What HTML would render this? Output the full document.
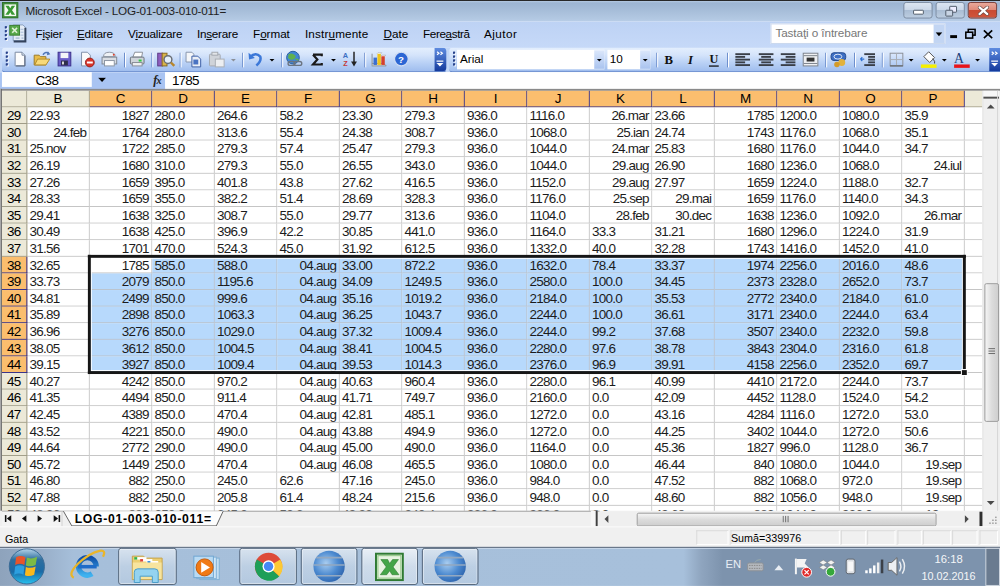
<!DOCTYPE html>
<html><head><meta charset="utf-8">
<style>
*{margin:0;padding:0;box-sizing:border-box}
html,body{width:1000px;height:586px;overflow:hidden;background:#fff}
body{font-family:"Liberation Sans",sans-serif}
#r{position:absolute;left:0;top:0;width:1024px;height:600px;transform:scale(0.9765625);transform-origin:0 0;overflow:hidden;background:#fff}
.a{position:absolute}
/* title */
#tb{position:absolute;left:0;top:0;width:1024px;height:22px;background:linear-gradient(#252525 0,#2a2a2a 1px,#b5cae3 1px,#9db5d2 3px,#a3bad6 8px,#b2c8e2 19px,#b8cde7 22px)}
#tt{position:absolute;left:26px;top:3px;font-size:12px;line-height:16px;color:#222;letter-spacing:-0.2px}
/* menu */
#mb{position:absolute;left:0;top:22px;width:1024px;height:27px;background:linear-gradient(#bdd2f4,#c6d9f8)}
.mi{position:absolute;top:5px;font-size:12px;line-height:16px;color:#000;letter-spacing:-0.35px}
.mi u{text-decoration:underline}
/* toolbar */
#tbr{position:absolute;left:0;top:49px;width:1024px;height:25px;background:#c3d7f7}
.tbar{position:absolute;top:0;height:25px;border-radius:3px;background:linear-gradient(#e3eefd 0,#d5e4fb 30%,#bcd3f6 60%,#9fbdee 100%);border-bottom:1px solid #5f83c8}
/* formula */
#fb{position:absolute;left:0;top:74px;width:1024px;height:19px;background:#fff}
/* grid */
.c{position:absolute;width:64px;height:17px;border-right:1px solid #c2c2c2;border-bottom:1px solid #c2c2c2;font-size:13.8px;letter-spacing:-0.8px;line-height:17px;padding:0 2.8px 0 2.3px;white-space:nowrap;overflow:hidden;color:#1c1c1c;background:#fff}
.c.r{text-align:right}
.c.s{background:#b7d9fc;border-color:#bcc3cb}
.c.q{width:18px;border-right:0}
.rh{position:absolute;left:2px;width:26px;height:17px;background:#ece9d8;border-right:1px solid #9c9984;border-bottom:1px solid #9c9984;font-size:13.8px;letter-spacing:-0.8px;text-indent:-0.8px;line-height:17px;text-align:center;color:#000}
.rh.sel{background:#fbbe6e;border-color:#2d2a8c}
.ch{position:absolute;top:93px;width:64px;height:17px;background:#ece9d8;border-right:1px solid #9c9984;border-bottom:1px solid #9c9984;font-size:13.8px;letter-spacing:-0.8px;text-indent:-0.8px;line-height:16px;text-align:center;color:#000}
.ch.sel{background:#fbbe6e;border-color:#2d2a8c}
.sb{position:absolute;background:#161616}
</style></head><body><div id="r">
<div id="tb"><svg class="a" style="left:2px;top:2px" width="17" height="17" viewBox="0 0 17 17">
<rect x="0.5" y="0.5" width="16" height="16" fill="#3f8c3a" stroke="#2d6e2a"/>
<rect x="2.5" y="2.5" width="12" height="12" fill="#f4f9f1"/>
<path d="M3.5 4 L7 4 L8.5 6.5 L10 4 L13.5 4 L10.3 8.5 L13.5 13 L10 13 L8.5 10.5 L7 13 L3.5 13 L6.7 8.5 Z" fill="#3a9a35"/>
</svg><div id="tt">Microsoft Excel - LOG-01-003-010-011=</div>
<div class="a" style="left:925px;top:2px;width:30px;height:17px;border:1px solid #7f8ea3;border-radius:3px;background:linear-gradient(#dbe5f1 0,#cbd8e8 45%,#aabdd4 50%,#bccde0 100%)"><div class="a" style="left:9px;top:7px;width:11px;height:5px;background:#fff;border:1px solid #515c6b;border-radius:1px"></div></div><div class="a" style="left:958px;top:2px;width:30px;height:17px;border:1px solid #7f8ea3;border-radius:3px;background:linear-gradient(#dbe5f1 0,#cbd8e8 45%,#aabdd4 50%,#bccde0 100%)"><div class="a" style="left:13px;top:3px;width:8px;height:7px;border:1.5px solid #515c6b;background:#eef;border-radius:1px"></div><div class="a" style="left:9px;top:7px;width:8px;height:7px;border:1.5px solid #515c6b;background:#c8d4e4;border-radius:1px"></div></div><div class="a" style="left:991px;top:2px;width:30px;height:17px;border:1px solid #7c3b33;border-radius:3px;background:linear-gradient(#e9a99b 0,#e08b7a 45%,#c94a32 50%,#d0553c 100%)"><svg class="a" style="left:9px;top:3px" width="12" height="10" viewBox="0 0 12 10"><path d="M2 1.5 L10 8.5 M10 1.5 L2 8.5" stroke="#6a4a46" stroke-width="3.6" stroke-linecap="round"/><path d="M2 1.5 L10 8.5 M10 1.5 L2 8.5" stroke="#fff" stroke-width="2.2" stroke-linecap="round"/></svg></div></div>
<div id="mb">
<svg class="a" style="left:0;top:0" width="40" height="27" viewBox="0 22 40 27">
<rect x="5" y="27" width="2" height="2" fill="#27418a"/><rect x="6" y="28" width="2" height="2" fill="#fff" opacity=".9"/><rect x="5" y="27" width="2" height="2" fill="#27418a"/><rect x="5" y="31" width="2" height="2" fill="#27418a"/><rect x="6" y="32" width="2" height="2" fill="#fff" opacity=".9"/><rect x="5" y="31" width="2" height="2" fill="#27418a"/><rect x="5" y="35" width="2" height="2" fill="#27418a"/><rect x="6" y="36" width="2" height="2" fill="#fff" opacity=".9"/><rect x="5" y="35" width="2" height="2" fill="#27418a"/><rect x="5" y="39" width="2" height="2" fill="#27418a"/><rect x="6" y="40" width="2" height="2" fill="#fff" opacity=".9"/><rect x="5" y="39" width="2" height="2" fill="#27418a"/>
<path d="M13.5 25.5 H23.5 L26 28 V41.5 H13.5 Z" fill="#e4ecf7" stroke="#8aa0bf"/>
<path d="M26 28.5 V42.5 H14" stroke="#34435c" stroke-width="2" fill="none"/>
<rect x="10" y="26" width="10" height="10" fill="#58a84a" stroke="#3b7f33"/>
<path d="M12.5 28.5 L17.5 33.5 M17.5 28.5 L12.5 33.5" stroke="#dff0d6" stroke-width="1.6"/>
<path d="M16 39 H20 M22 39 H24" stroke="#8fa6c6"/>
<path d="M21 30 H24 M21 33 H24 M21 36 H24" stroke="#a8bbd6"/>
</svg>
<div class="mi" style="left:36.4px;letter-spacing:-0.33px">F<u>i</u>şier</div><div class="mi" style="left:78.8px;letter-spacing:-0.17px"><u>E</u>ditare</div><div class="mi" style="left:131.1px;letter-spacing:-0.27px">V<u>i</u>zualizare</div><div class="mi" style="left:201.7px;letter-spacing:-0.26px">In<u>s</u>erare</div><div class="mi" style="left:259.1px;letter-spacing:-0.06px">F<u>o</u>rmat</div><div class="mi" style="left:312.3px;letter-spacing:0.14px">Instr<u>u</u>mente</div><div class="mi" style="left:392.7px;letter-spacing:0px"><u>D</u>ate</div><div class="mi" style="left:433.2px;letter-spacing:-0.4px">Fere<u>a</u>stră</div><div class="mi" style="left:495.6px;letter-spacing:0.45px">A<u>j</u>utor</div>
<div class="a" style="left:789px;top:2px;width:179px;height:21px;background:#fff;border:1px solid #c9d7ee"></div>
<div class="a" style="left:956px;top:3px;width:11px;height:19px;background:#c2d5f3"></div>
<svg class="a" style="left:958px;top:11px" width="7" height="4"><path d="M0 0 H7 L3.5 4 Z" fill="#000"/></svg>
<div class="a" style="left:794px;top:5px;font-size:12px;line-height:15px;color:#777;letter-spacing:-0.1px">Tastaţi o întrebare</div>
<div class="a" style="left:973px;top:14px;width:7px;height:3px;background:#000"></div>
<svg class="a" style="left:988px;top:7px" width="12" height="11"><rect x="3.5" y="1" width="7" height="6" fill="none" stroke="#000" stroke-width="1.6"/><rect x="1" y="4" width="7" height="6" fill="#c3d7f7" stroke="#000" stroke-width="1.6"/></svg>
<svg class="a" style="left:1006px;top:8px" width="12" height="10"><path d="M1.5 1 L10 9 M10 1 L1.5 9" stroke="#000" stroke-width="1.7"/></svg>
</div>
<div id="tbr">
<div class="tbar" style="left:2px;width:455px"></div><div class="tbar" style="left:460px;width:580px"></div>
<svg class="a" style="left:0;top:0" width="1024" height="25" viewBox="0 0 1024 25">
<defs><linearGradient id="chev" x1="0" y1="0" x2="0" y2="1"><stop offset="0" stop-color="#5f8ce0"/><stop offset="1" stop-color="#143a9c"/></linearGradient>
<linearGradient id="ddg" x1="0" y1="0" x2="0" y2="1"><stop offset="0" stop-color="#dbe7fb"/><stop offset="1" stop-color="#a9c3ef"/></linearGradient></defs>
<rect x="6" y="4" width="2" height="2" fill="#27418a"/><rect x="7" y="5" width="2" height="2" fill="#fff" opacity=".9"/><rect x="6" y="4" width="2" height="2" fill="#27418a"/><rect x="6" y="8" width="2" height="2" fill="#27418a"/><rect x="7" y="9" width="2" height="2" fill="#fff" opacity=".9"/><rect x="6" y="8" width="2" height="2" fill="#27418a"/><rect x="6" y="12" width="2" height="2" fill="#27418a"/><rect x="7" y="13" width="2" height="2" fill="#fff" opacity=".9"/><rect x="6" y="12" width="2" height="2" fill="#27418a"/><rect x="6" y="16" width="2" height="2" fill="#27418a"/><rect x="7" y="17" width="2" height="2" fill="#fff" opacity=".9"/><rect x="6" y="16" width="2" height="2" fill="#27418a"/>
<path d="M15.5 4.5 H22.5 L25.5 7.5 V18.5 H15.5 Z" fill="#fdfdfd" stroke="#7b8aa3"/><path d="M22.5 4.5 V7.5 H25.5" fill="#dde3ec" stroke="#7b8aa3"/><path d="M16.5 18.5 H25.5 V8" stroke="#56627a" fill="none"/><path d="M35 7.5 H40 L41.5 9 H47 V17.5 H35 Z" fill="#e9bd4a" stroke="#9c7a26"/><path d="M35.5 17.5 L38.5 11.5 H51 L47 17.5 Z" fill="#f8d978" stroke="#b08a2a"/><path d="M44 7 Q47 3 50 6" stroke="#4f76b8" stroke-width="1.6" fill="none"/><path d="M49 3.5 L51.5 6.5 L48 7.5 Z" fill="#4f76b8"/><rect x="59.5" y="4.5" width="13" height="14" fill="#6a5cc8" stroke="#3b2f8a"/><rect x="62" y="5" width="8" height="5.5" fill="#f4f4f8"/><rect x="62.5" y="13" width="7" height="5" fill="#2f2f4a"/><rect x="63.5" y="14" width="2" height="3" fill="#ddd"/><path d="M83.5 4.5 H89.5 L92.5 7.5 V18.5 H83.5 Z" fill="#fafafa" stroke="#8090a8"/><circle cx="92" cy="15" r="4.5" fill="#d8342a" stroke="#9a1f18"/><rect x="89" y="14" width="6" height="2" fill="#fff"/><path d="M106 9 Q106 4.5 112 4.5 Q118 4.5 118 9 Z" fill="#eef1f5" stroke="#8d96a3"/><rect x="104.5" y="9.5" width="15" height="7" fill="#d9dde3" stroke="#7f8792"/><rect x="107" y="13" width="10" height="5.5" fill="#fff" stroke="#8d96a3"/><circle cx="116.5" cy="7" r="1" fill="#e0442f"/><rect x="127" y="5" width="1" height="15" fill="#6a8ccb"/><rect x="128" y="5" width="1" height="15" fill="#fff"/><path d="M136 9.5 L138 4.5 H146 L145 9.5 Z" fill="#fff" stroke="#8a8f98"/><rect x="133.5" y="9.5" width="14" height="7" rx="1" fill="#cfd4da" stroke="#6d737c"/><rect x="135.5" y="15" width="10" height="3.5" fill="#eceef0" stroke="#8a8f98"/><rect x="142" y="12" width="3" height="2" fill="#2ecc40"/><rect x="155" y="5" width="1" height="15" fill="#6a8ccb"/><rect x="156" y="5" width="1" height="15" fill="#fff"/><rect x="161.5" y="5.5" width="5" height="13" fill="#8f5fbf" stroke="#5c3a86"/><rect x="166" y="5.5" width="5" height="13" fill="#d9b44a" stroke="#8a6b20"/><circle cx="172" cy="12" r="4" fill="#e6f0fa" stroke="#6a6f76" stroke-width="1.5"/><path d="M175 15 L178.5 18.5" stroke="#b8862c" stroke-width="2.5"/><rect x="184" y="5" width="1" height="15" fill="#6a8ccb"/><rect x="185" y="5" width="1" height="15" fill="#fff"/><path d="M190.5 4.5 H196.5 L198.5 6.5 V14.5 H190.5 Z" fill="#f4f6f9" stroke="#8796ad"/><path d="M196.5 8.5 H202.5 L205.5 11.5 V19.5 H196.5 Z" fill="#e9eef6" stroke="#3a5da6"/><rect x="198" y="12" width="5" height="5" fill="#4a73c2"/><rect x="214.5" y="6.5" width="11" height="12" rx="1" fill="#cfd3d9" stroke="#a4a9b0"/><rect x="217" y="4.5" width="6" height="3" fill="#e2e5e8" stroke="#a4a9b0"/><rect x="220.5" y="11.5" width="9" height="8" fill="#eceef1" stroke="#a9aeb5"/><path d="M236.5 11.5 H241.5 L239 14 Z" fill="#8a8f98"/><rect x="248" y="5" width="1" height="15" fill="#6a8ccb"/><rect x="249" y="5" width="1" height="15" fill="#fff"/><path d="M256 9.5 Q262 4 266.5 9 Q268 13.5 262.5 18" stroke="#3c78d8" stroke-width="2.6" fill="none"/><path d="M254.5 5 L255 12 L261 10.5 Z" fill="#3c78d8"/><path d="M276.0 11.5 H281.0 L278.5 14 Z" fill="#000"/><rect x="288" y="5" width="1" height="15" fill="#6a8ccb"/><rect x="289" y="5" width="1" height="15" fill="#fff"/><circle cx="300" cy="10" r="6.5" fill="#3f86d6" stroke="#2a5f9e"/><path d="M295.5 6.5 Q299 4.5 302 7.5 Q304 10.5 300 12 Q297 13 295 10.5 Z" fill="#5fb04f"/><path d="M302.5 12 Q305 11 305.5 13" stroke="#5fb04f" stroke-width="1.5" fill="none"/><rect x="295" y="14" width="7" height="4" rx="2" fill="none" stroke="#6b7480" stroke-width="1.4"/><rect x="301" y="14" width="8" height="4" rx="2" fill="none" stroke="#6b7480" stroke-width="1.4"/><path d="M320.5 7 H329.5 V8.5 M320.5 7 L325 12 L320.5 17 H329.5 V15.5" stroke="#1a1a1a" stroke-width="2.2" fill="none" stroke-linejoin="miter"/><path d="M339.0 11.5 H344.0 L341.5 14 Z" fill="#000"/><text x="351" y="10" font-size="7.5" font-family="Liberation Sans" font-weight="bold" fill="#3d6fc4">A</text><text x="351.5" y="19" font-size="7.5" font-family="Liberation Sans" font-weight="bold" fill="#c43a3a">Z</text><path d="M362.5 4 V17" stroke="#222" stroke-width="1.5"/><path d="M359.5 14 H365.5 L362.5 19 Z" fill="#222"/><rect x="373" y="5" width="1" height="15" fill="#6a8ccb"/><rect x="374" y="5" width="1" height="15" fill="#fff"/><path d="M380.5 18.5 H395.5 L393 16 H381" fill="#d9dde3" stroke="#8b8f96"/><path d="M381 6 V18" stroke="#8b8f96"/><rect x="382.5" y="10" width="3.5" height="7.5" fill="#3c6fd0"/><rect x="386.5" y="5.5" width="3.5" height="12" fill="#f0c419"/><rect x="390.5" y="8" width="3.5" height="9.5" fill="#d6402c"/><path d="M386 6 L387 5 H391 L390 6 M390 8.5 L391 7.5 H395 L394 8.5" fill="#fff" stroke="#999" stroke-width=".5"/><circle cx="411" cy="11.5" r="7" fill="#2c66d4" stroke="#cfdcf2" stroke-width="1.2"/><text x="407.5" y="15.5" font-size="10" font-weight="bold" font-family="Liberation Sans" fill="#fff">?</text><path d="M445 0 H453.5 Q457 0 457 3.5 V20.5 Q457 24 453.5 24 H445 Z" fill="url(#chev)"/><path d="M447.5 4 L449.5 5.5 L447.5 7 M451 4 L453 5.5 L451 7" stroke="#fff" stroke-width="1.2" fill="none"/><rect x="447" y="13" width="7" height="1.2" fill="#fff"/><path d="M447 15.5 H454 L450.5 19 Z" fill="#fff"/><rect x="464" y="4" width="2" height="2" fill="#27418a"/><rect x="465" y="5" width="2" height="2" fill="#fff" opacity=".9"/><rect x="464" y="4" width="2" height="2" fill="#27418a"/><rect x="464" y="8" width="2" height="2" fill="#27418a"/><rect x="465" y="9" width="2" height="2" fill="#fff" opacity=".9"/><rect x="464" y="8" width="2" height="2" fill="#27418a"/><rect x="464" y="12" width="2" height="2" fill="#27418a"/><rect x="465" y="13" width="2" height="2" fill="#fff" opacity=".9"/><rect x="464" y="12" width="2" height="2" fill="#27418a"/><rect x="464" y="16" width="2" height="2" fill="#27418a"/><rect x="465" y="17" width="2" height="2" fill="#fff" opacity=".9"/><rect x="464" y="16" width="2" height="2" fill="#27418a"/><rect x="468" y="2" width="151" height="20" fill="#fff"/><rect x="608.5" y="2.5" width="10.5" height="19" fill="url(#ddg)"/><path d="M611.2 11.5 H616.2 L613.7 14 Z" fill="#000"/><rect x="622" y="2" width="44" height="20" fill="#fff"/><rect x="655.5" y="2.5" width="10.5" height="19" fill="url(#ddg)"/><path d="M658.2 11.5 H663.2 L660.7 14 Z" fill="#000"/><rect x="672" y="5" width="1" height="15" fill="#6a8ccb"/><rect x="673" y="5" width="1" height="15" fill="#fff"/><text x="680.5" y="17" font-size="13" font-weight="bold" font-family="Liberation Serif" fill="#111">B</text><text x="704.5" y="17" font-size="13" font-style="italic" font-weight="bold" font-family="Liberation Serif" fill="#111">I</text><text x="726.5" y="16" font-size="12.5" font-weight="bold" font-family="Liberation Serif" fill="#111">U</text><rect x="726" y="18" width="10" height="1.3" fill="#111"/><rect x="744.5" y="5" width="1" height="15" fill="#6a8ccb"/><rect x="745.5" y="5" width="1" height="15" fill="#fff"/><rect x="753" y="5.5" width="15" height="1.9" fill="#3a3f48"/><rect x="753" y="8.3" width="10" height="1.9" fill="#3a3f48"/><rect x="753" y="11.1" width="15" height="1.9" fill="#3a3f48"/><rect x="753" y="13.899999999999999" width="10" height="1.9" fill="#3a3f48"/><rect x="753" y="16.7" width="15" height="1.9" fill="#3a3f48"/><rect x="777" y="5.5" width="15" height="1.9" fill="#3a3f48"/><rect x="779.5" y="8.3" width="10" height="1.9" fill="#3a3f48"/><rect x="777" y="11.1" width="15" height="1.9" fill="#3a3f48"/><rect x="779.5" y="13.899999999999999" width="10" height="1.9" fill="#3a3f48"/><rect x="777" y="16.7" width="15" height="1.9" fill="#3a3f48"/><rect x="799.5" y="5.5" width="15" height="1.9" fill="#3a3f48"/><rect x="804.5" y="8.3" width="10" height="1.9" fill="#3a3f48"/><rect x="799.5" y="11.1" width="15" height="1.9" fill="#3a3f48"/><rect x="804.5" y="13.899999999999999" width="10" height="1.9" fill="#3a3f48"/><rect x="799.5" y="16.7" width="15" height="1.9" fill="#3a3f48"/><rect x="822.5" y="5.5" width="15" height="13" fill="#eef0f3" stroke="#7c828b"/><rect x="826" y="10" width="8" height="4" fill="#333"/><path d="M823 8 H837 M823 16 H837" stroke="#7c828b"/><rect x="845" y="5" width="1" height="15" fill="#6a8ccb"/><rect x="846" y="5" width="1" height="15" fill="#fff"/><rect x="851" y="5" width="15" height="8" rx="3" fill="#3d6fc4" stroke="#244a8e"/><ellipse cx="858" cy="9" rx="4" ry="2.5" fill="none" stroke="#dfe8f8"/><circle cx="862" cy="15" r="3.5" fill="#e3b23c"/><circle cx="857" cy="17" r="2.8" fill="#d49b2a"/><rect x="874.5" y="5" width="1" height="15" fill="#6a8ccb"/><rect x="875.5" y="5" width="1" height="15" fill="#fff"/><rect x="885" y="5.5" width="11" height="1.9" fill="#3a3f48"/><rect x="889" y="8.3" width="7" height="1.9" fill="#3a3f48"/><rect x="889" y="11.1" width="7" height="1.9" fill="#3a3f48"/><rect x="889" y="13.899999999999999" width="7" height="1.9" fill="#3a3f48"/><rect x="885" y="16.7" width="11" height="1.9" fill="#3a3f48"/><path d="M881 11.5 H885 M881 11.5 L883 9.5 M881 11.5 L883 13.5" stroke="#2b6fd2" stroke-width="1.2"/><rect x="903" y="5" width="1" height="15" fill="#6a8ccb"/><rect x="904" y="5" width="1" height="15" fill="#fff"/><rect x="911.5" y="5.5" width="13" height="13" fill="none" stroke="#8b9098"/><path d="M918 5.5 V18.5 M911.5 12 H924.5" stroke="#a8acb3"/><path d="M911.5 18.5 H924.5" stroke="#555"/><path d="M930.5 11.5 H935.5 L933 14 Z" fill="#000"/><path d="M946 9 L951 4 L957 10 L952 15 Z" fill="#fdfdfd" stroke="#555"/><path d="M955 11 Q958 14 957 16" stroke="#444" fill="none"/><rect x="943" y="17" width="16" height="3.5" fill="#f6f000"/><path d="M964.5 11.5 H969.5 L967 14 Z" fill="#000"/><text x="977" y="15.5" font-size="14" font-family="Liberation Serif" fill="#20407a">A</text><rect x="977" y="17" width="16" height="3.5" fill="#e8141b"/><path d="M998.5 11.5 H1003.5 L1001 14 Z" fill="#000"/><path d="M1013 0 H1024 V24 H1013 Q1013 24 1013 20 Z" fill="url(#chev)"/><path d="M1015.5 4 L1017.5 5.5 L1015.5 7 M1019 4 L1021 5.5 L1019 7" stroke="#fff" stroke-width="1.2" fill="none"/><rect x="1015" y="13" width="7" height="1.2" fill="#fff"/><path d="M1015 15.5 H1022 L1018.5 19 Z" fill="#fff"/>
<text x="471" y="15.5" font-size="12" font-family="Liberation Sans" fill="#000">Arial</text>
<text x="624.5" y="15.5" font-size="12" font-family="Liberation Sans" fill="#000">10</text>
</svg></div>
<div id="fb">
<div class="a" style="left:0;top:0;width:2px;height:16px;background:#a9c4f2"></div>
<div class="a" style="left:94px;top:0;width:75px;height:16px;background:#a9c4f2"></div>
<div class="a" style="left:0;top:15px;width:169px;height:2px;background:#a9c4f2"></div>
<div class="a" style="left:2px;top:0.5px;width:92px;height:15px;font-size:13.8px;letter-spacing:-0.6px;line-height:15px;text-align:center">C38</div>
<svg class="a" style="left:100px;top:5px" width="9" height="6"><path d="M0.5 0.5 H8.5 L4.5 5 Z" fill="#000"/></svg>
<div class="a" style="left:157px;top:0;font-size:12.5px;line-height:16px;font-style:italic;font-family:'Liberation Serif',serif;letter-spacing:-1px;font-weight:bold;color:#222">f<span style="font-size:10.5px">x</span></div>
<div class="a" style="left:176px;top:0.5px;font-size:13.8px;letter-spacing:-0.8px;line-height:15px">1785</div>
</div>
<div class="a" style="left:0;top:90px;width:169px;height:1px;background:#a9c4f2"></div>
<div class="a" style="left:0;top:91px;width:1024px;height:2px;background:#8a8a8a"></div>
<div class="a" style="left:0;top:91px;width:2px;height:433px;background:linear-gradient(90deg,#a8a8a8 50%,#6a6a6a 50%)"></div>
<div class="ch corner" style="left:2px;width:26px"></div>
<div class="ch" style="left:28px">B</div>
<div class="ch sel" style="left:92px">C</div>
<div class="ch sel" style="left:156px">D</div>
<div class="ch sel" style="left:220px">E</div>
<div class="ch sel" style="left:284px">F</div>
<div class="ch sel" style="left:348px">G</div>
<div class="ch sel" style="left:412px">H</div>
<div class="ch sel" style="left:476px">I</div>
<div class="ch sel" style="left:540px">J</div>
<div class="ch sel" style="left:604px">K</div>
<div class="ch sel" style="left:668px">L</div>
<div class="ch sel" style="left:732px">M</div>
<div class="ch sel" style="left:796px">N</div>
<div class="ch sel" style="left:860px">O</div>
<div class="ch sel" style="left:924px">P</div>
<div class="ch" style="left:988px;width:18px;border-right:0"></div>
<div class="c" style="left:28px;top:110px">22.93</div>
<div class="c r" style="left:92px;top:110px">1827</div>
<div class="c" style="left:156px;top:110px">280.0</div>
<div class="c" style="left:220px;top:110px">264.6</div>
<div class="c" style="left:284px;top:110px">58.2</div>
<div class="c" style="left:348px;top:110px">23.30</div>
<div class="c" style="left:412px;top:110px">279.3</div>
<div class="c" style="left:476px;top:110px">936.0</div>
<div class="c" style="left:540px;top:110px">1116.0</div>
<div class="c r" style="left:604px;top:110px">26.mar</div>
<div class="c" style="left:668px;top:110px">23.66</div>
<div class="c r" style="left:732px;top:110px">1785</div>
<div class="c" style="left:796px;top:110px">1200.0</div>
<div class="c" style="left:860px;top:110px">1080.0</div>
<div class="c" style="left:924px;top:110px">35.9</div>
<div class="rh" style="top:110px">29</div>
<div class="c r" style="left:28px;top:127px">24.feb</div>
<div class="c r" style="left:92px;top:127px">1764</div>
<div class="c" style="left:156px;top:127px">280.0</div>
<div class="c" style="left:220px;top:127px">313.6</div>
<div class="c" style="left:284px;top:127px">55.4</div>
<div class="c" style="left:348px;top:127px">24.38</div>
<div class="c" style="left:412px;top:127px">308.7</div>
<div class="c" style="left:476px;top:127px">936.0</div>
<div class="c" style="left:540px;top:127px">1068.0</div>
<div class="c r" style="left:604px;top:127px">25.ian</div>
<div class="c" style="left:668px;top:127px">24.74</div>
<div class="c r" style="left:732px;top:127px">1743</div>
<div class="c" style="left:796px;top:127px">1176.0</div>
<div class="c" style="left:860px;top:127px">1068.0</div>
<div class="c" style="left:924px;top:127px">35.1</div>
<div class="rh" style="top:127px">30</div>
<div class="c" style="left:28px;top:144px">25.nov</div>
<div class="c r" style="left:92px;top:144px">1722</div>
<div class="c" style="left:156px;top:144px">285.0</div>
<div class="c" style="left:220px;top:144px">279.3</div>
<div class="c" style="left:284px;top:144px">57.4</div>
<div class="c" style="left:348px;top:144px">25.47</div>
<div class="c" style="left:412px;top:144px">279.3</div>
<div class="c" style="left:476px;top:144px">936.0</div>
<div class="c" style="left:540px;top:144px">1044.0</div>
<div class="c r" style="left:604px;top:144px">24.mar</div>
<div class="c" style="left:668px;top:144px">25.83</div>
<div class="c r" style="left:732px;top:144px">1680</div>
<div class="c" style="left:796px;top:144px">1176.0</div>
<div class="c" style="left:860px;top:144px">1044.0</div>
<div class="c" style="left:924px;top:144px">34.7</div>
<div class="rh" style="top:144px">31</div>
<div class="c" style="left:28px;top:161px">26.19</div>
<div class="c r" style="left:92px;top:161px">1680</div>
<div class="c" style="left:156px;top:161px">310.0</div>
<div class="c" style="left:220px;top:161px">279.3</div>
<div class="c" style="left:284px;top:161px">55.0</div>
<div class="c" style="left:348px;top:161px">26.55</div>
<div class="c" style="left:412px;top:161px">343.0</div>
<div class="c" style="left:476px;top:161px">936.0</div>
<div class="c" style="left:540px;top:161px">1044.0</div>
<div class="c r" style="left:604px;top:161px">29.aug</div>
<div class="c" style="left:668px;top:161px">26.90</div>
<div class="c r" style="left:732px;top:161px">1680</div>
<div class="c" style="left:796px;top:161px">1236.0</div>
<div class="c" style="left:860px;top:161px">1068.0</div>
<div class="c r" style="left:924px;top:161px">24.iul</div>
<div class="rh" style="top:161px">32</div>
<div class="c" style="left:28px;top:178px">27.26</div>
<div class="c r" style="left:92px;top:178px">1659</div>
<div class="c" style="left:156px;top:178px">395.0</div>
<div class="c" style="left:220px;top:178px">401.8</div>
<div class="c" style="left:284px;top:178px">43.8</div>
<div class="c" style="left:348px;top:178px">27.62</div>
<div class="c" style="left:412px;top:178px">416.5</div>
<div class="c" style="left:476px;top:178px">936.0</div>
<div class="c" style="left:540px;top:178px">1152.0</div>
<div class="c r" style="left:604px;top:178px">29.aug</div>
<div class="c" style="left:668px;top:178px">27.97</div>
<div class="c r" style="left:732px;top:178px">1659</div>
<div class="c" style="left:796px;top:178px">1224.0</div>
<div class="c" style="left:860px;top:178px">1188.0</div>
<div class="c" style="left:924px;top:178px">32.7</div>
<div class="rh" style="top:178px">33</div>
<div class="c" style="left:28px;top:195px">28.33</div>
<div class="c r" style="left:92px;top:195px">1659</div>
<div class="c" style="left:156px;top:195px">355.0</div>
<div class="c" style="left:220px;top:195px">382.2</div>
<div class="c" style="left:284px;top:195px">51.4</div>
<div class="c" style="left:348px;top:195px">28.69</div>
<div class="c" style="left:412px;top:195px">328.3</div>
<div class="c" style="left:476px;top:195px">936.0</div>
<div class="c" style="left:540px;top:195px">1176.0</div>
<div class="c r" style="left:604px;top:195px">25.sep</div>
<div class="c r" style="left:668px;top:195px">29.mai</div>
<div class="c r" style="left:732px;top:195px">1659</div>
<div class="c" style="left:796px;top:195px">1176.0</div>
<div class="c" style="left:860px;top:195px">1140.0</div>
<div class="c" style="left:924px;top:195px">34.3</div>
<div class="rh" style="top:195px">34</div>
<div class="c" style="left:28px;top:212px">29.41</div>
<div class="c r" style="left:92px;top:212px">1638</div>
<div class="c" style="left:156px;top:212px">325.0</div>
<div class="c" style="left:220px;top:212px">308.7</div>
<div class="c" style="left:284px;top:212px">55.0</div>
<div class="c" style="left:348px;top:212px">29.77</div>
<div class="c" style="left:412px;top:212px">313.6</div>
<div class="c" style="left:476px;top:212px">936.0</div>
<div class="c" style="left:540px;top:212px">1104.0</div>
<div class="c r" style="left:604px;top:212px">28.feb</div>
<div class="c r" style="left:668px;top:212px">30.dec</div>
<div class="c r" style="left:732px;top:212px">1638</div>
<div class="c" style="left:796px;top:212px">1236.0</div>
<div class="c" style="left:860px;top:212px">1092.0</div>
<div class="c r" style="left:924px;top:212px">26.mar</div>
<div class="rh" style="top:212px">35</div>
<div class="c" style="left:28px;top:229px">30.49</div>
<div class="c r" style="left:92px;top:229px">1638</div>
<div class="c" style="left:156px;top:229px">425.0</div>
<div class="c" style="left:220px;top:229px">396.9</div>
<div class="c" style="left:284px;top:229px">42.2</div>
<div class="c" style="left:348px;top:229px">30.85</div>
<div class="c" style="left:412px;top:229px">441.0</div>
<div class="c" style="left:476px;top:229px">936.0</div>
<div class="c" style="left:540px;top:229px">1164.0</div>
<div class="c" style="left:604px;top:229px">33.3</div>
<div class="c" style="left:668px;top:229px">31.21</div>
<div class="c r" style="left:732px;top:229px">1680</div>
<div class="c" style="left:796px;top:229px">1296.0</div>
<div class="c" style="left:860px;top:229px">1224.0</div>
<div class="c" style="left:924px;top:229px">31.9</div>
<div class="rh" style="top:229px">36</div>
<div class="c" style="left:28px;top:246px">31.56</div>
<div class="c r" style="left:92px;top:246px">1701</div>
<div class="c" style="left:156px;top:246px">470.0</div>
<div class="c" style="left:220px;top:246px">524.3</div>
<div class="c" style="left:284px;top:246px">45.0</div>
<div class="c" style="left:348px;top:246px">31.92</div>
<div class="c" style="left:412px;top:246px">612.5</div>
<div class="c" style="left:476px;top:246px">936.0</div>
<div class="c" style="left:540px;top:246px">1332.0</div>
<div class="c" style="left:604px;top:246px">40.0</div>
<div class="c" style="left:668px;top:246px">32.28</div>
<div class="c r" style="left:732px;top:246px">1743</div>
<div class="c" style="left:796px;top:246px">1416.0</div>
<div class="c" style="left:860px;top:246px">1452.0</div>
<div class="c" style="left:924px;top:246px">41.0</div>
<div class="rh" style="top:246px">37</div>
<div class="c" style="left:28px;top:263px">32.65</div>
<div class="c r" style="left:92px;top:263px">1785</div>
<div class="c s" style="left:156px;top:263px">585.0</div>
<div class="c s" style="left:220px;top:263px">588.0</div>
<div class="c r s" style="left:284px;top:263px">04.aug</div>
<div class="c s" style="left:348px;top:263px">33.00</div>
<div class="c s" style="left:412px;top:263px">872.2</div>
<div class="c s" style="left:476px;top:263px">936.0</div>
<div class="c s" style="left:540px;top:263px">1632.0</div>
<div class="c s" style="left:604px;top:263px">78.4</div>
<div class="c s" style="left:668px;top:263px">33.37</div>
<div class="c r s" style="left:732px;top:263px">1974</div>
<div class="c s" style="left:796px;top:263px">2256.0</div>
<div class="c s" style="left:860px;top:263px">2016.0</div>
<div class="c s" style="left:924px;top:263px">48.6</div>
<div class="rh sel" style="top:263px">38</div>
<div class="c" style="left:28px;top:280px">33.73</div>
<div class="c r s" style="left:92px;top:280px">2079</div>
<div class="c s" style="left:156px;top:280px">850.0</div>
<div class="c s" style="left:220px;top:280px">1195.6</div>
<div class="c r s" style="left:284px;top:280px">04.aug</div>
<div class="c s" style="left:348px;top:280px">34.09</div>
<div class="c s" style="left:412px;top:280px">1249.5</div>
<div class="c s" style="left:476px;top:280px">936.0</div>
<div class="c s" style="left:540px;top:280px">2580.0</div>
<div class="c s" style="left:604px;top:280px">100.0</div>
<div class="c s" style="left:668px;top:280px">34.45</div>
<div class="c r s" style="left:732px;top:280px">2373</div>
<div class="c s" style="left:796px;top:280px">2328.0</div>
<div class="c s" style="left:860px;top:280px">2652.0</div>
<div class="c s" style="left:924px;top:280px">73.7</div>
<div class="rh sel" style="top:280px">39</div>
<div class="c" style="left:28px;top:297px">34.81</div>
<div class="c r s" style="left:92px;top:297px">2499</div>
<div class="c s" style="left:156px;top:297px">850.0</div>
<div class="c s" style="left:220px;top:297px">999.6</div>
<div class="c r s" style="left:284px;top:297px">04.aug</div>
<div class="c s" style="left:348px;top:297px">35.16</div>
<div class="c s" style="left:412px;top:297px">1019.2</div>
<div class="c s" style="left:476px;top:297px">936.0</div>
<div class="c s" style="left:540px;top:297px">2184.0</div>
<div class="c s" style="left:604px;top:297px">100.0</div>
<div class="c s" style="left:668px;top:297px">35.53</div>
<div class="c r s" style="left:732px;top:297px">2772</div>
<div class="c s" style="left:796px;top:297px">2340.0</div>
<div class="c s" style="left:860px;top:297px">2184.0</div>
<div class="c s" style="left:924px;top:297px">61.0</div>
<div class="rh sel" style="top:297px">40</div>
<div class="c" style="left:28px;top:314px">35.89</div>
<div class="c r s" style="left:92px;top:314px">2898</div>
<div class="c s" style="left:156px;top:314px">850.0</div>
<div class="c s" style="left:220px;top:314px">1063.3</div>
<div class="c r s" style="left:284px;top:314px">04.aug</div>
<div class="c s" style="left:348px;top:314px">36.25</div>
<div class="c s" style="left:412px;top:314px">1043.7</div>
<div class="c s" style="left:476px;top:314px">936.0</div>
<div class="c s" style="left:540px;top:314px">2244.0</div>
<div class="c s" style="left:604px;top:314px">100.0</div>
<div class="c s" style="left:668px;top:314px">36.61</div>
<div class="c r s" style="left:732px;top:314px">3171</div>
<div class="c s" style="left:796px;top:314px">2340.0</div>
<div class="c s" style="left:860px;top:314px">2244.0</div>
<div class="c s" style="left:924px;top:314px">63.4</div>
<div class="rh sel" style="top:314px">41</div>
<div class="c" style="left:28px;top:331px">36.96</div>
<div class="c r s" style="left:92px;top:331px">3276</div>
<div class="c s" style="left:156px;top:331px">850.0</div>
<div class="c s" style="left:220px;top:331px">1029.0</div>
<div class="c r s" style="left:284px;top:331px">04.aug</div>
<div class="c s" style="left:348px;top:331px">37.32</div>
<div class="c s" style="left:412px;top:331px">1009.4</div>
<div class="c s" style="left:476px;top:331px">936.0</div>
<div class="c s" style="left:540px;top:331px">2244.0</div>
<div class="c s" style="left:604px;top:331px">99.2</div>
<div class="c s" style="left:668px;top:331px">37.68</div>
<div class="c r s" style="left:732px;top:331px">3507</div>
<div class="c s" style="left:796px;top:331px">2340.0</div>
<div class="c s" style="left:860px;top:331px">2232.0</div>
<div class="c s" style="left:924px;top:331px">59.8</div>
<div class="rh sel" style="top:331px">42</div>
<div class="c" style="left:28px;top:348px">38.05</div>
<div class="c r s" style="left:92px;top:348px">3612</div>
<div class="c s" style="left:156px;top:348px">850.0</div>
<div class="c s" style="left:220px;top:348px">1004.5</div>
<div class="c r s" style="left:284px;top:348px">04.aug</div>
<div class="c s" style="left:348px;top:348px">38.41</div>
<div class="c s" style="left:412px;top:348px">1004.5</div>
<div class="c s" style="left:476px;top:348px">936.0</div>
<div class="c s" style="left:540px;top:348px">2280.0</div>
<div class="c s" style="left:604px;top:348px">97.6</div>
<div class="c s" style="left:668px;top:348px">38.78</div>
<div class="c r s" style="left:732px;top:348px">3843</div>
<div class="c s" style="left:796px;top:348px">2304.0</div>
<div class="c s" style="left:860px;top:348px">2316.0</div>
<div class="c s" style="left:924px;top:348px">61.8</div>
<div class="rh sel" style="top:348px">43</div>
<div class="c" style="left:28px;top:365px">39.15</div>
<div class="c r s" style="left:92px;top:365px">3927</div>
<div class="c s" style="left:156px;top:365px">850.0</div>
<div class="c s" style="left:220px;top:365px">1009.4</div>
<div class="c r s" style="left:284px;top:365px">04.aug</div>
<div class="c s" style="left:348px;top:365px">39.53</div>
<div class="c s" style="left:412px;top:365px">1014.3</div>
<div class="c s" style="left:476px;top:365px">936.0</div>
<div class="c s" style="left:540px;top:365px">2376.0</div>
<div class="c s" style="left:604px;top:365px">96.9</div>
<div class="c s" style="left:668px;top:365px">39.91</div>
<div class="c r s" style="left:732px;top:365px">4158</div>
<div class="c s" style="left:796px;top:365px">2256.0</div>
<div class="c s" style="left:860px;top:365px">2352.0</div>
<div class="c s" style="left:924px;top:365px">69.7</div>
<div class="rh sel" style="top:365px">44</div>
<div class="c" style="left:28px;top:382px">40.27</div>
<div class="c r" style="left:92px;top:382px">4242</div>
<div class="c" style="left:156px;top:382px">850.0</div>
<div class="c" style="left:220px;top:382px">970.2</div>
<div class="c r" style="left:284px;top:382px">04.aug</div>
<div class="c" style="left:348px;top:382px">40.63</div>
<div class="c" style="left:412px;top:382px">960.4</div>
<div class="c" style="left:476px;top:382px">936.0</div>
<div class="c" style="left:540px;top:382px">2280.0</div>
<div class="c" style="left:604px;top:382px">96.1</div>
<div class="c" style="left:668px;top:382px">40.99</div>
<div class="c r" style="left:732px;top:382px">4410</div>
<div class="c" style="left:796px;top:382px">2172.0</div>
<div class="c" style="left:860px;top:382px">2244.0</div>
<div class="c" style="left:924px;top:382px">73.7</div>
<div class="rh" style="top:382px">45</div>
<div class="c" style="left:28px;top:399px">41.35</div>
<div class="c r" style="left:92px;top:399px">4494</div>
<div class="c" style="left:156px;top:399px">850.0</div>
<div class="c" style="left:220px;top:399px">911.4</div>
<div class="c r" style="left:284px;top:399px">04.aug</div>
<div class="c" style="left:348px;top:399px">41.71</div>
<div class="c" style="left:412px;top:399px">749.7</div>
<div class="c" style="left:476px;top:399px">936.0</div>
<div class="c" style="left:540px;top:399px">2160.0</div>
<div class="c" style="left:604px;top:399px">0.0</div>
<div class="c" style="left:668px;top:399px">42.09</div>
<div class="c r" style="left:732px;top:399px">4452</div>
<div class="c" style="left:796px;top:399px">1128.0</div>
<div class="c" style="left:860px;top:399px">1524.0</div>
<div class="c" style="left:924px;top:399px">54.2</div>
<div class="rh" style="top:399px">46</div>
<div class="c" style="left:28px;top:416px">42.45</div>
<div class="c r" style="left:92px;top:416px">4389</div>
<div class="c" style="left:156px;top:416px">850.0</div>
<div class="c" style="left:220px;top:416px">470.4</div>
<div class="c r" style="left:284px;top:416px">04.aug</div>
<div class="c" style="left:348px;top:416px">42.81</div>
<div class="c" style="left:412px;top:416px">485.1</div>
<div class="c" style="left:476px;top:416px">936.0</div>
<div class="c" style="left:540px;top:416px">1272.0</div>
<div class="c" style="left:604px;top:416px">0.0</div>
<div class="c" style="left:668px;top:416px">43.16</div>
<div class="c r" style="left:732px;top:416px">4284</div>
<div class="c" style="left:796px;top:416px">1116.0</div>
<div class="c" style="left:860px;top:416px">1272.0</div>
<div class="c" style="left:924px;top:416px">53.0</div>
<div class="rh" style="top:416px">47</div>
<div class="c" style="left:28px;top:433px">43.52</div>
<div class="c r" style="left:92px;top:433px">4221</div>
<div class="c" style="left:156px;top:433px">850.0</div>
<div class="c" style="left:220px;top:433px">490.0</div>
<div class="c r" style="left:284px;top:433px">04.aug</div>
<div class="c" style="left:348px;top:433px">43.88</div>
<div class="c" style="left:412px;top:433px">494.9</div>
<div class="c" style="left:476px;top:433px">936.0</div>
<div class="c" style="left:540px;top:433px">1272.0</div>
<div class="c" style="left:604px;top:433px">0.0</div>
<div class="c" style="left:668px;top:433px">44.25</div>
<div class="c r" style="left:732px;top:433px">3402</div>
<div class="c" style="left:796px;top:433px">1044.0</div>
<div class="c" style="left:860px;top:433px">1272.0</div>
<div class="c" style="left:924px;top:433px">50.6</div>
<div class="rh" style="top:433px">48</div>
<div class="c" style="left:28px;top:450px">44.64</div>
<div class="c r" style="left:92px;top:450px">2772</div>
<div class="c" style="left:156px;top:450px">290.0</div>
<div class="c" style="left:220px;top:450px">490.0</div>
<div class="c r" style="left:284px;top:450px">04.aug</div>
<div class="c" style="left:348px;top:450px">45.00</div>
<div class="c" style="left:412px;top:450px">490.0</div>
<div class="c" style="left:476px;top:450px">936.0</div>
<div class="c" style="left:540px;top:450px">1164.0</div>
<div class="c" style="left:604px;top:450px">0.0</div>
<div class="c" style="left:668px;top:450px">45.36</div>
<div class="c r" style="left:732px;top:450px">1827</div>
<div class="c" style="left:796px;top:450px">996.0</div>
<div class="c" style="left:860px;top:450px">1128.0</div>
<div class="c" style="left:924px;top:450px">36.7</div>
<div class="rh" style="top:450px">49</div>
<div class="c" style="left:28px;top:467px">45.72</div>
<div class="c r" style="left:92px;top:467px">1449</div>
<div class="c" style="left:156px;top:467px">250.0</div>
<div class="c" style="left:220px;top:467px">470.4</div>
<div class="c r" style="left:284px;top:467px">04.aug</div>
<div class="c" style="left:348px;top:467px">46.08</div>
<div class="c" style="left:412px;top:467px">465.5</div>
<div class="c" style="left:476px;top:467px">936.0</div>
<div class="c" style="left:540px;top:467px">1080.0</div>
<div class="c" style="left:604px;top:467px">0.0</div>
<div class="c" style="left:668px;top:467px">46.44</div>
<div class="c r" style="left:732px;top:467px">840</div>
<div class="c" style="left:796px;top:467px">1080.0</div>
<div class="c" style="left:860px;top:467px">1044.0</div>
<div class="c r" style="left:924px;top:467px">19.sep</div>
<div class="rh" style="top:467px">50</div>
<div class="c" style="left:28px;top:484px">46.80</div>
<div class="c r" style="left:92px;top:484px">882</div>
<div class="c" style="left:156px;top:484px">250.0</div>
<div class="c" style="left:220px;top:484px">245.0</div>
<div class="c" style="left:284px;top:484px">62.6</div>
<div class="c" style="left:348px;top:484px">47.16</div>
<div class="c" style="left:412px;top:484px">245.0</div>
<div class="c" style="left:476px;top:484px">936.0</div>
<div class="c" style="left:540px;top:484px">984.0</div>
<div class="c" style="left:604px;top:484px">0.0</div>
<div class="c" style="left:668px;top:484px">47.52</div>
<div class="c r" style="left:732px;top:484px">882</div>
<div class="c" style="left:796px;top:484px">1068.0</div>
<div class="c" style="left:860px;top:484px">972.0</div>
<div class="c r" style="left:924px;top:484px">19.sep</div>
<div class="rh" style="top:484px">51</div>
<div class="c" style="left:28px;top:501px">47.88</div>
<div class="c r" style="left:92px;top:501px">882</div>
<div class="c" style="left:156px;top:501px">250.0</div>
<div class="c" style="left:220px;top:501px">205.8</div>
<div class="c" style="left:284px;top:501px">61.4</div>
<div class="c" style="left:348px;top:501px">48.24</div>
<div class="c" style="left:412px;top:501px">215.6</div>
<div class="c" style="left:476px;top:501px">936.0</div>
<div class="c" style="left:540px;top:501px">948.0</div>
<div class="c" style="left:604px;top:501px">0.0</div>
<div class="c" style="left:668px;top:501px">48.60</div>
<div class="c r" style="left:732px;top:501px">882</div>
<div class="c" style="left:796px;top:501px">1056.0</div>
<div class="c" style="left:860px;top:501px">948.0</div>
<div class="c r" style="left:924px;top:501px">19.sep</div>
<div class="rh" style="top:501px">52</div>
<div class="c" style="left:28px;top:518px">48.96</div>
<div class="c r" style="left:92px;top:518px">882</div>
<div class="c" style="left:156px;top:518px">250.0</div>
<div class="c" style="left:220px;top:518px">245.0</div>
<div class="c" style="left:284px;top:518px">50.2</div>
<div class="c" style="left:348px;top:518px">49.33</div>
<div class="c" style="left:412px;top:518px">240.4</div>
<div class="c" style="left:476px;top:518px">936.0</div>
<div class="c" style="left:540px;top:518px">936.0</div>
<div class="c" style="left:604px;top:518px">0.0</div>
<div class="c" style="left:668px;top:518px">49.68</div>
<div class="c r" style="left:732px;top:518px">882</div>
<div class="c" style="left:796px;top:518px">1044.0</div>
<div class="c" style="left:860px;top:518px">936.0</div>
<div class="c r" style="left:924px;top:518px">19.sep</div>
<div class="rh" style="top:518px">53</div>
<div class="c q" style="left:988px;top:110px"></div>
<div class="c q" style="left:988px;top:127px"></div>
<div class="c q" style="left:988px;top:144px"></div>
<div class="c q" style="left:988px;top:161px"></div>
<div class="c q" style="left:988px;top:178px"></div>
<div class="c q" style="left:988px;top:195px"></div>
<div class="c q" style="left:988px;top:212px"></div>
<div class="c q" style="left:988px;top:229px"></div>
<div class="c q" style="left:988px;top:246px"></div>
<div class="c q" style="left:988px;top:263px"></div>
<div class="c q" style="left:988px;top:280px"></div>
<div class="c q" style="left:988px;top:297px"></div>
<div class="c q" style="left:988px;top:314px"></div>
<div class="c q" style="left:988px;top:331px"></div>
<div class="c q" style="left:988px;top:348px"></div>
<div class="c q" style="left:988px;top:365px"></div>
<div class="c q" style="left:988px;top:382px"></div>
<div class="c q" style="left:988px;top:399px"></div>
<div class="c q" style="left:988px;top:416px"></div>
<div class="c q" style="left:988px;top:433px"></div>
<div class="c q" style="left:988px;top:450px"></div>
<div class="c q" style="left:988px;top:467px"></div>
<div class="c q" style="left:988px;top:484px"></div>
<div class="c q" style="left:988px;top:501px"></div>
<div class="c q" style="left:988px;top:518px"></div>

<div class="a" style="left:93px;top:264px;width:893px;height:116px;border:1px solid #fff"></div>
<div class="sb" style="left:90px;top:261px;width:899px;height:3px"></div>
<div class="sb" style="left:90px;top:261px;width:3px;height:122px"></div>
<div class="sb" style="left:90px;top:380px;width:894px;height:3px"></div>
<div class="sb" style="left:986px;top:261px;width:3px;height:117px"></div>
<div class="a" style="left:984px;top:378px;width:7px;height:7px;background:#fff"></div>
<div class="sb" style="left:985px;top:379px;width:5px;height:5px;border:0"></div>


<div class="a" style="left:0;top:523px;width:1024px;height:16px;background:#f0f0f0"></div>
<div class="a" style="left:2px;top:523px;width:612px;height:1px;background:#a0a0a0"></div>
<div class="a" style="left:2px;top:524px;width:62px;height:15px;background:#f3f3f3;border-right:1px solid #d0d0d0"></div>
<svg class="a" style="left:0;top:523px" width="240" height="16" viewBox="0 0 240 16">
<rect x="5" y="4.5" width="1.6" height="7" fill="#111"/><path d="M11.5 4.5 V11.5 L7 8 Z" fill="#111"/>
<path d="M27 4.5 V11.5 L22.5 8 Z" fill="#111"/>
<path d="M38.5 4.5 V11.5 L43 8 Z" fill="#111"/>
<path d="M55 4.5 V11.5 L59.5 8 Z" fill="#111"/><rect x="60" y="4.5" width="1.6" height="7" fill="#111"/>
<path d="M65 0.5 L73.5 15.5 H221.5 L228.5 0.5" fill="#fdfdfd" stroke="#606060"/>
<text x="76.5" y="13" font-size="12.5" font-weight="bold" font-family="Liberation Sans" letter-spacing="0.72" fill="#000">LOG-01-003-010-011=</text>
</svg>


<div class="a" style="left:1006px;top:93px;width:18px;height:430px;background:#efefef;border-left:1px solid #e3e3e3"></div>
<div class="a" style="left:1007px;top:93px;width:16px;height:8px;background:#f7f7f7;border-bottom:2px solid #505050"></div>
<div class="a" style="left:1021px;top:93px;width:1px;height:430px;background:#d6d6d6"></div>
<svg class="a" style="left:1010px;top:106px" width="9" height="6"><path d="M0.5 5 L4.5 1 L8.5 5 Z" fill="#4a4a4a"/></svg>
<svg class="a" style="left:1010px;top:512px" width="9" height="6"><path d="M0.5 1 H8.5 L4.5 5 Z" fill="#4a4a4a"/></svg>
<div class="a" style="left:1008px;top:290px;width:15px;height:142px;border:1px solid #9a9a9a;border-radius:2px;background:linear-gradient(90deg,#f4f4f4,#dcdcdc 50%,#cfcfcf)"></div>
<svg class="a" style="left:1012px;top:356px" width="7" height="8"><path d="M0 1 H7 M0 3.5 H7 M0 6 H7" stroke="#6a6a6a"/></svg>
<div class="a" style="left:605px;top:523px;width:7px;height:16px;background:#f7f7f7;border-right:2px solid #404040"></div>
<div class="a" style="left:613px;top:524px;width:393px;height:15px;background:#efefef"></div>
<svg class="a" style="left:618px;top:527px" width="6" height="9"><path d="M5 0.5 V8.5 L1 4.5 Z" fill="#4a4a4a"/></svg>
<svg class="a" style="left:987px;top:527px" width="6" height="9"><path d="M1 0.5 V8.5 L5 4.5 Z" fill="#4a4a4a"/></svg>
<div class="a" style="left:652px;top:525px;width:307px;height:14px;border:1px solid #9a9a9a;border-radius:2px;background:linear-gradient(#f4f4f4,#dcdcdc 50%,#cfcfcf)"></div>
<svg class="a" style="left:801px;top:528px" width="8" height="7"><path d="M1 0 V7 M3.5 0 V7 M6 0 V7" stroke="#6a6a6a"/></svg>
<div class="a" style="left:1003px;top:524px;width:3px;height:15px;background:#303030"></div>
<svg class="a" style="left:1012px;top:528px" width="10" height="10"><g fill="#9a9a9a"><rect x="7" y="1" width="1.5" height="1.5"/><rect x="7" y="4" width="1.5" height="1.5"/><rect x="4" y="4" width="1.5" height="1.5"/><rect x="7" y="7" width="1.5" height="1.5"/><rect x="4" y="7" width="1.5" height="1.5"/><rect x="1" y="7" width="1.5" height="1.5"/></g></svg>


<div class="a" style="left:0;top:539px;width:1024px;height:21px;background:#f0f0f0;border-top:1px solid #fbfbfb"></div>
<div class="a" style="left:5px;top:545px;font-size:11px;line-height:14px;color:#000">Gata</div>
<div class="a" style="left:713.2px;top:543px;width:33.3px;height:15px;border:1px solid #d9d9d9;border-right-color:#fff;border-bottom-color:#fff"></div><div class="a" style="left:747.5px;top:543px;width:112.7px;height:15px;border:1px solid #d9d9d9;border-right-color:#fff;border-bottom-color:#fff"></div><div class="a" style="left:861.2px;top:543px;width:25.6px;height:15px;border:1px solid #d9d9d9;border-right-color:#fff;border-bottom-color:#fff"></div><div class="a" style="left:887.8px;top:543px;width:29.7px;height:15px;border:1px solid #d9d9d9;border-right-color:#fff;border-bottom-color:#fff"></div><div class="a" style="left:918.5px;top:543px;width:25.6px;height:15px;border:1px solid #d9d9d9;border-right-color:#fff;border-bottom-color:#fff"></div><div class="a" style="left:945.2px;top:543px;width:28.6px;height:15px;border:1px solid #d9d9d9;border-right-color:#fff;border-bottom-color:#fff"></div><div class="a" style="left:974.8px;top:543px;width:26.7px;height:15px;border:1px solid #d9d9d9;border-right-color:#fff;border-bottom-color:#fff"></div><div class="a" style="left:1002.5px;top:543px;width:19.5px;height:15px;border:1px solid #d9d9d9;border-right-color:#fff;border-bottom-color:#fff"></div><div class="a" style="left:748.5px;top:544px;font-size:11px;line-height:14px;color:#000">Sumă=339976</div>

<div class="a" style="left:0;top:560px;width:1024px;height:40px;background:linear-gradient(90deg,#8ea3bc 0,#97adc7 40px,#a6bfda 75px,#a7c0db 700px,#8fa5bf 718px,#7d93ad 740px,#7d93ad 100%)"></div>
<div class="a" style="left:0;top:560px;width:1024px;height:1px;background:#4e5a6a"></div>
<div class="a" style="left:0;top:561px;width:1024px;height:1px;background:#c9d8ea"></div>
<div class="a" style="left:121px;top:561px;width:60px;height:38px;border:1px solid #55657a;border-radius:3px;background:linear-gradient(rgba(255,255,255,.55),rgba(255,255,255,.25) 50%,rgba(255,255,255,.15));box-shadow:inset 0 0 0 1px rgba(255,255,255,.5)"></div><div class="a" style="left:245px;top:561px;width:59px;height:38px;border:1px solid #55657a;border-radius:3px;background:linear-gradient(rgba(255,255,255,.55),rgba(255,255,255,.25) 50%,rgba(255,255,255,.15));box-shadow:inset 0 0 0 1px rgba(255,255,255,.5)"></div><div class="a" style="left:308px;top:561px;width:58px;height:38px;border:1px solid #55657a;border-radius:3px;background:linear-gradient(rgba(255,255,255,.55),rgba(255,255,255,.25) 50%,rgba(255,255,255,.15));box-shadow:inset 0 0 0 1px rgba(255,255,255,.5)"></div><div class="a" style="left:370px;top:561px;width:58px;height:38px;border:1px solid #55657a;border-radius:3px;background:linear-gradient(rgba(255,255,255,.75),rgba(255,255,255,.45) 50%,rgba(255,255,255,.35));box-shadow:inset 0 0 0 1px rgba(255,255,255,.5)"></div><div class="a" style="left:432px;top:561px;width:58px;height:38px;border:1px solid #55657a;border-radius:3px;background:linear-gradient(rgba(255,255,255,.55),rgba(255,255,255,.25) 50%,rgba(255,255,255,.15));box-shadow:inset 0 0 0 1px rgba(255,255,255,.5)"></div>
<svg class="a" style="left:0;top:560px" width="1024" height="40" viewBox="0 560 1024 40">
<defs>
<linearGradient id="orb" x1="0" y1="0" x2="0" y2="1"><stop offset="0" stop-color="#b7d5ea"/><stop offset=".3" stop-color="#2f6f9f"/><stop offset=".65" stop-color="#1a6aa6"/><stop offset="1" stop-color="#27c2f0"/></linearGradient><linearGradient id="iebl" x1="0" y1="0" x2="0" y2="1"><stop offset="0" stop-color="#0f4fa8"/><stop offset="1" stop-color="#3fb2ef"/></linearGradient>
<radialGradient id="glob" cx=".4" cy=".4" r=".7"><stop offset="0" stop-color="#a9cdf0"/><stop offset=".55" stop-color="#4c8ad0"/><stop offset="1" stop-color="#2a5fa8"/></radialGradient>
</defs>
<circle cx="27.5" cy="580" r="18" fill="url(#orb)" stroke="#3a6a96"/>
<path d="M16.5 570.5 Q21 568 26 570.5 L25 578.5 Q20.5 576 15.5 578.5 Z" fill="#e8542a"/>
<path d="M27.5 571 Q32.5 573 38 570 L36.5 578.5 Q31.5 581 26.5 579 Z" fill="#7cba45"/>
<path d="M15.5 580 Q20.5 577.5 25 580 L24 588.5 Q19.5 586 14.5 588.5 Z" fill="#2c9fe0"/>
<path d="M26.5 580.5 Q31.5 582.5 36.5 580 L35 588.5 Q30 591 25.5 589 Z" fill="#f9b81c"/>
<circle cx="89.5" cy="580" r="9" fill="none" stroke="url(#iebl)" stroke-width="5.5" stroke-dasharray="47.5 9" stroke-dashoffset="-9"/>
<rect x="80" y="578.5" width="19" height="3.6" fill="#1f6cc8"/>
<path d="M75.5 591.5 Q69 588 80 577 Q92 566 102 564 Q109 563 105.5 570" stroke="#e9b52b" stroke-width="2.3" fill="none"/>
<path d="M135.5 569.5 H147 L149 571.5 H166 V593.5 H135.5 Z" fill="#eccf72" stroke="#c5a24a"/>
<rect x="138" y="570.5" width="12" height="2.5" fill="#fff"/><rect x="144" y="572.5" width="12" height="2.5" fill="#fff"/><rect x="150" y="574.5" width="12" height="2.5" fill="#fff"/>
<rect x="137.5" y="570.5" width="3" height="2.5" fill="#2fb34a"/><rect x="143.5" y="572.5" width="3" height="2.5" fill="#d9423a"/><rect x="151" y="574.5" width="3" height="2.5" fill="#3a8ed9"/>
<rect x="136" y="576" width="29.5" height="17" fill="#f7e49e"/>
<path d="M137.5 596.5 V586 Q137.5 582.5 141 582.5 H158.5 Q162 582.5 162 586 V596.5 H156 V590 H143.5 V596.5 Z" fill="#94d3f0" stroke="#4a9cc8"/>
<rect x="204.5" y="571.5" width="20" height="22" fill="#c4def2" stroke="#7fb0d6"/><rect x="201.5" y="570.5" width="20" height="22" fill="#cfe6f7" stroke="#7fb0d6"/><rect x="198.5" y="569.5" width="20" height="22" fill="#b9daf3" stroke="#6fa6d2"/>
<circle cx="209.5" cy="581" r="8.7" fill="#f07a16" stroke="#c75a0a"/><path d="M206 575.5 L215 581 L206 586.5 Z" fill="#fff"/>
<circle cx="275" cy="580" r="14" fill="#dd4b39"/>
<path d="M275 580 L263 587 A14 14 0 0 0 286 590 Z" fill="#1e9f58"/>
<path d="M275 580 L287 573 A14 14 0 0 1 286 590 Z" fill="#fcc934"/>
<path d="M263 573 A14 14 0 0 0 267 591.5 L275 580 Z" fill="#1e9f58"/>
<circle cx="275" cy="580" r="6.2" fill="#fff"/><circle cx="275" cy="580" r="4.8" fill="#4688f4"/>
<circle cx="337" cy="580" r="16" fill="url(#glob)"/>
<path d="M323.8 571 H350.2 M321.1 578.5 H352.9 M324.1 589.5 H349.9" stroke="#93a8c0" stroke-width="1.6"/>
<rect x="385" y="567" width="27.5" height="27" fill="#e8f3e2" stroke="#2f7a33" stroke-width="2"/>
<rect x="387" y="569" width="23.5" height="23" fill="none" stroke="#8cc47f" stroke-width="1"/>
<path d="M390 573 H397 L399 577 L402 573 H408 L402.5 580.5 L408.5 588.5 H401.5 L399 584.5 L396 588.5 H389.5 L395.5 580.5 Z" fill="#44a548" stroke="#2c7a30" stroke-width=".6"/>
<circle cx="461" cy="580" r="16" fill="url(#glob)"/>
<path d="M447.8 571 H474.2 M445.1 578.5 H476.9 M448.1 589.5 H473.9" stroke="#93a8c0" stroke-width="1.6"/>
<text x="743" y="582" font-size="11.5" font-family="Liberation Sans" fill="#e9eef5">EN</text>
<rect x="765.5" y="576.5" width="16" height="8" rx="1.5" fill="#b4b8bd" stroke="#8d9197"/><path d="M767 579 H780 M767 582 H780" stroke="#888" stroke-dasharray="1.5 1"/><path d="M773 576 Q774 573 779 573" stroke="#9aa" fill="none"/>
<path d="M793 584 L797.5 578.5 L802 584 Z" fill="#e8edf3"/>
<rect x="814" y="572" width="2" height="16" fill="#f4f4f4"/><path d="M816 572.5 H826 L824 577 L828 581 H816 Z" fill="#f4f4f4"/>
<circle cx="826" cy="586" r="5" fill="#e02a2a" stroke="#fff"/><path d="M823.8 583.8 L828.2 588.2 M828.2 583.8 L823.8 588.2" stroke="#fff" stroke-width="1.3"/>
<path d="M839 576 L843 573.5 L847 576 L843 578.5 Z M847 576 L851 573.5 L855 576 L851 578.5 Z M839 581 L843 578.5 L847 581 L843 583.5 Z M847 581 L851 578.5 L855 581 L851 583.5 Z" fill="#f2f2f2" stroke="#777" stroke-width=".5"/>
<circle cx="850.5" cy="585.5" r="4.5" fill="#35a83a" stroke="#fff"/>
<rect x="866.5" y="572.5" width="9" height="15" rx="2" fill="#dcdfe3" stroke="#5f6670"/><rect x="868.5" y="575" width="5" height="10" fill="#f8f8f8"/>
<rect x="886" y="584" width="2.5" height="3" fill="#fff"/><rect x="890" y="582" width="2.5" height="5" fill="#fff"/><rect x="894" y="579" width="2.5" height="8" fill="#fff"/><rect x="898" y="576" width="2.5" height="11" fill="#eee"/><rect x="902" y="573" width="2.5" height="14" fill="#3b4048"/>
<path d="M909.5 576 H913 L918.5 571 V589 L913 584 H909.5 Z" fill="#eceff2" stroke="#666"/>
<path d="M921 575 Q924 580 921 585 M924 572.5 Q928.5 580 924 587.5" stroke="#eceff2" stroke-width="1.5" fill="none"/>
<text x="957" y="577" font-size="11.5" font-family="Liberation Sans" fill="#f4f6f8">16:18</text>
<text x="943.5" y="593.5" font-size="11.1" font-family="Liberation Sans" fill="#f4f6f8">10.02.2016</text>
<rect x="1009.5" y="561.5" width="14" height="38" fill="#6a7b90" stroke="#cfd7e0"/>
</svg>

</div></body></html>
